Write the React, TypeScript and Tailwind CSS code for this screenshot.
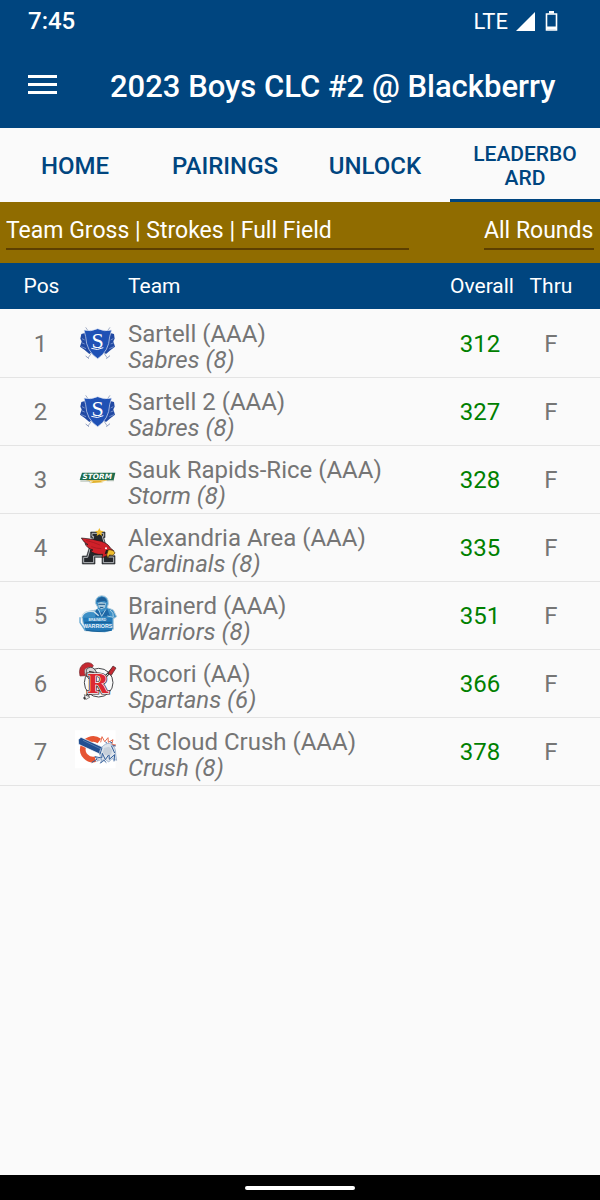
import type { ReactNode } from "react";

type TeamRow = {
  pos: number;
  name: string;
  mascot: string;
  overall: number;
  thru: string;
  logo: ReactNode;
};

function SabresLogo() {
  return (
    <svg viewBox="15 21 132 132" className="block size-11" role="img" aria-label="Sabres">
      <path d="M47 40 L112 132 M120 40 L54 132" stroke="#a3aec6" strokeWidth="3" />
      <path d="M47 126l10 8M109 134l11-9" stroke="#8d9bc0" strokeWidth="3" />
      <path d="M34 60l14-4 4 34 14 24-8 6-14-12-14-10 5-16-4-8z" fill="#2149a3" />
      <path d="M132 60l-14-4-4 34-14 24 8 6 14-12 13-10-5-16 4-8z" fill="#2149a3" />
      <path d="M36 74l8 4M34 86l10 4M34 98l14 6M130 74l-8 4M132 86l-10 4M132 98l-14 6" stroke="#9cb0dc" strokeWidth="2" />
      <path d="M42 48q20 6 41-4 21 10 42 4l-6 20q-2 44-36 66-34-22-36-66z" fill="#1f51b5" stroke="#dfe6f4" strokeWidth="2" />
      <text x="83" y="103" textAnchor="middle" fill="#fff" className="font-['Liberation_Serif'] text-[66px]">
        S
      </text>
      <path d="M64 103q18 8 36-2" fill="none" stroke="#fff" strokeWidth="3" />
    </svg>
  );
}

function StormLogo() {
  return (
    <svg viewBox="15 7 132 132" className="block size-11" role="img" aria-label="Storm">
      <path d="M36 54h100l-5 22H29z" fill="#1c6b4c" />
      <path d="M46 77h72l-26 4 8 2-42 3 12-5z" fill="#e3b32d" />
      <path d="M31 79h24l6 4M110 78h22" stroke="#79917b" strokeWidth="2" fill="none" />
      <text x="82" y="73" textAnchor="middle" fill="#fff" className="font-['DejaVu_Sans'] text-[22px] font-bold italic">
        STORM
      </text>
    </svg>
  );
}

function CardinalsLogo() {
  return (
    <svg viewBox="15 15 132 132" className="block size-11" role="img" aria-label="Cardinals">
      <path
        d="M62 36h43v17h-4l16 54h18v25H96v-20H75v20H37v-24h13l17-55h-5z"
        fill="#24272b"
        stroke="#3a3d41"
        strokeWidth="2"
      />
      <path
        d="M66 40h35v9h-4l17 62h17v17h-31v-20H71v20H41v-16h12l18-63h-5z"
        fill="none"
        stroke="#b9bcc0"
        strokeWidth="3"
      />
      <path d="M88 24l4 8 9 1-7 6 2 9-8-5-8 5 2-9-7-6 9-1z" fill="#f0bd2c" />
      <path
        d="M34 54q32 2 60 10 20 6 27 20l10 8-7 12-16 4-12 6 2-11q-26 2-38-12 6 1 9-1-20-6-24-20 5 4 9 4-14-7-20-20z"
        fill="#cf2029"
        stroke="#1d1718"
        strokeWidth="2"
      />
      <path d="M48 61q24 6 42 14M64 80q16 6 30 6" stroke="#a0171f" strokeWidth="2" fill="none" />
      <path d="M108 90l10 0-4 9-10 4z" fill="#1c1a1b" />
      <path d="M115 89q17 0 20 10l-6 7-11-1-4 9-4-9z" fill="#efbd2c" stroke="#3c2b0b" strokeWidth="2" />
      <circle cx="108" cy="85" r="3" fill="#fff" />
    </svg>
  );
}

function WarriorsLogo() {
  return (
    <svg viewBox="15 15 132 132" className="block size-11" role="img" aria-label="Warriors">
      <path
        d="M76 45q0-20 19-22 21 1 20 24l-3 12 18 7 10 20-10 6v32l-26 8-60-4-8-40q2-16 20-18l22-4 6-6z"
        fill="#3d8fc6"
        stroke="#aecbdc"
        strokeWidth="3"
      />
      <path d="M80 42q2-14 15-15 14 0 16 16l-8-4-13 2z" fill="#1e609a" />
      <path d="M84 45l9-3 15 3-3 14-10 5-9-6z" fill="#a9c9dc" />
      <path d="M85 49h20M90 58l10 1" stroke="#205d91" strokeWidth="3" />
      <path d="M78 64l16 9 18-10 8 22-44 2z" fill="#1e67a6" />
      <path d="M120 66q12 8 10 22l-18-4M85 63l10 22 12-20" fill="none" stroke="#a8cee4" strokeWidth="3" />
      <path d="M36 85q8-19 36-14l14 12" fill="none" stroke="#d1e2eb" strokeWidth="4" />
      <path d="M40 89h86v39q-40 9-82-1z" fill="#2279b9" />
      <text x="82" y="99" textAnchor="middle" fill="#e5f2f8" className="font-['Liberation_Sans'] text-[10px] font-bold">
        BRAINERD
      </text>
      <text x="83" y="120" textAnchor="middle" fill="#eef6fa" className="font-['Liberation_Sans'] text-[16px] font-bold">
        WARRIORS
      </text>
      <path d="M44 103h80M48 127q36 7 74 0" stroke="#175583" strokeWidth="2" fill="none" />
      <path d="M30 88v16l15 22" stroke="#68aad4" strokeWidth="4" fill="none" />
    </svg>
  );
}

function SpartansLogo() {
  return (
    <svg viewBox="15 18 132 132" className="block size-11" role="img" aria-label="Spartans">
      <circle cx="86" cy="83" r="43" fill="#fafafa" stroke="#46474a" strokeWidth="3" />
      <path d="M42 132l88-92" stroke="#393537" strokeWidth="8" />
      <path d="M48 127l66-70" stroke="#e4e3e3" strokeWidth="3" />
      <path d="M114 55l15-22 9 6-14 22z" fill="#c52831" stroke="#3f2427" strokeWidth="2" />
      <path d="M43 119l17 7-11 7-3-4z" fill="#f2f2f2" stroke="#555" strokeWidth="2" />
      <path
        d="M30 63q-7-29 16-39 17-4 24 8l-6 10q-10-9-19 0-5 8 2 20z"
        fill="#c52831"
        stroke="#743035"
        strokeWidth="2"
      />
      <path d="M49 44q12-13 24-2l11 16-14 13-4-10-9 11-9-12z" fill="#d7d7d8" stroke="#515155" strokeWidth="3" />
      <path d="M57 49l15 3M61 57l8-3" stroke="#333" strokeWidth="3" />
      <text
        x="83"
        y="113"
        textAnchor="middle"
        fill="#dd2831"
        stroke="#3c2629"
        strokeWidth="9"
        paintOrder="stroke"
        className="font-['DejaVu_Serif'] text-[78px] font-bold"
      >
        R
      </text>
      <text
        x="83"
        y="113"
        textAnchor="middle"
        fill="#dd2831"
        stroke="#fff"
        strokeWidth="4"
        paintOrder="stroke"
        className="font-['DejaVu_Serif'] text-[78px] font-bold"
      >
        R
      </text>
    </svg>
  );
}

function CrushLogo() {
  return (
    <svg viewBox="15 10 132 132" className="block size-11 overflow-visible" role="img" aria-label="Crush">
      <path d="M15 14h122v114H15z" fill="#fff" />
      <path d="M88 46A31 31 0 1 0 76 101" fill="none" stroke="#e65533" strokeWidth="17" />
      <path d="M92 50l4-17 8 15 10-12 1 14 14-8-4 14 12 2-13 6" fill="#fff" stroke="#e96b4d" strokeWidth="3" />
      <path d="M25 42l8-7 72 33-9 20-70-32z" fill="#214f91" stroke="#fff" strokeWidth="2" />
      <path d="M39 44l58 28" stroke="#6e92bd" strokeWidth="2" />
      <path
        d="M100 60q13-11 25-4 13 10 12 29l3 19-14-5-10 10-9-7-16 10 5-11-16 6 11-15q-8-18 9-32z"
        fill="#dfe5ec"
        stroke="#7d9abf"
        strokeWidth="2"
      />
      <path
        d="M65 111l17-11-7-7 20 4 2-14 9 19 11-16 1 15 16-14-2 20M96 66l-6 20M124 60l10 22M91 113l10-10 8 8"
        fill="none"
        stroke="#315d99"
        strokeWidth="3"
      />
      <path d="M102 67l15-4 10 10-4 14-17 2-8-8z" fill="#c6cfda" />
      <path d="M119 48l8 4M107 48l3 5M128 60l9 1" stroke="#315d99" strokeWidth="3" />
    </svg>
  );
}

const tabs = ["Home", "Pairings", "Unlock"];

const rows: TeamRow[] = [
  { pos: 1, name: "Sartell (AAA)", mascot: "Sabres (8)", overall: 312, thru: "F", logo: <SabresLogo /> },
  { pos: 2, name: "Sartell 2 (AAA)", mascot: "Sabres (8)", overall: 327, thru: "F", logo: <SabresLogo /> },
  { pos: 3, name: "Sauk Rapids-Rice (AAA)", mascot: "Storm (8)", overall: 328, thru: "F", logo: <StormLogo /> },
  { pos: 4, name: "Alexandria Area (AAA)", mascot: "Cardinals (8)", overall: 335, thru: "F", logo: <CardinalsLogo /> },
  { pos: 5, name: "Brainerd (AAA)", mascot: "Warriors (8)", overall: 351, thru: "F", logo: <WarriorsLogo /> },
  { pos: 6, name: "Rocori (AA)", mascot: "Spartans (6)", overall: 366, thru: "F", logo: <SpartansLogo /> },
  { pos: 7, name: "St Cloud Crush (AAA)", mascot: "Crush (8)", overall: 378, thru: "F", logo: <CrushLogo /> },
];

function StatusBar() {
  return (
    <div className="flex h-[42px] items-center justify-between pr-[42px] pl-7">
      <span className="text-2xl font-medium">7:45</span>
      <div className="flex items-center">
        <span className="text-[22px]">LTE</span>
        <svg viewBox="0 0 19 19" className="ml-2 size-[19px]" fill="currentColor" aria-hidden="true">
          <path d="M19 0v19H0z" />
        </svg>
        <svg viewBox="0 0 13 20" className="ml-[10px] h-5 w-[13px]" fill="none" stroke="currentColor" aria-hidden="true">
          <path d="M1.5 3h10v16h-10z" strokeWidth="1.6" />
          <path d="M4 1h5M1 17h11" strokeWidth="3" />
        </svg>
      </div>
    </div>
  );
}

export default function App() {
  return (
    <div className="flex min-h-screen flex-col bg-[#fafafa] font-[Roboto,sans-serif] text-[#757575]">
      <header className="bg-[#00457f] text-white">
        <StatusBar />
        <div className="flex h-[86px] items-center pt-1 pl-7">
          <button type="button" aria-label="Open menu" className="pb-1">
            <svg viewBox="0 0 30 20" className="block h-5 w-[30px]" fill="currentColor" aria-hidden="true">
              <path d="M0 0h29v3H0zM0 8h29v3H0zM0 16h29v3H0z" />
            </svg>
          </button>
          <h1 className="ml-[52px] text-[31px] font-medium whitespace-nowrap">2023 Boys CLC #2 @ Blackberry</h1>
        </div>
      </header>

      <nav className="grid h-[74px] grid-cols-4 font-medium text-[#00457f] uppercase">
        {tabs.map((tab) => (
          <a key={tab} href={`#${tab.toLowerCase()}`} className="flex items-center justify-center pt-0.5 text-2xl">
            {tab}
          </a>
        ))}
        <a
          href="#leaderboard"
          aria-current="page"
          className="flex items-center justify-center border-b-3 border-[#00457f] px-5 pt-1 text-center text-[21px] leading-6 break-all"
        >
          Leaderboard
        </a>
      </nav>

      <div className="flex h-[61px] justify-between bg-[#906c00] px-[6px] pt-3 text-[23px] text-white">
        <select
          aria-label="Leaderboard type"
          className="mr-[75px] h-9 min-w-0 flex-1 appearance-none border-b-2 border-[#5c3f00] bg-transparent"
        >
          <option>Team Gross | Strokes | Full Field</option>
        </select>
        <select aria-label="Rounds" className="h-9 appearance-none border-b-2 border-[#5c3f00] bg-transparent">
          <option>All Rounds</option>
        </select>
      </div>

      <table className="w-full table-fixed">
        <thead className="bg-[#00457f] text-[21px] text-white">
          <tr className="h-[46px]">
            <th className="w-[75px] pt-0.5 pl-2 font-normal">Pos</th>
            <th className="w-[53px]" aria-label="Logo" />
            <th className="pt-0.5 text-left font-normal">Team</th>
            <th className="w-20 pt-0.5 pl-1 font-normal">Overall</th>
            <th className="w-20 pt-0.5 pr-[18px] font-normal">Thru</th>
          </tr>
        </thead>
        <tbody className="text-2xl">
          {rows.map((row) => (
            <tr key={row.pos} className="h-[68px] border-b border-[#e4e4e4]">
              <td className="pt-0.5 pl-1.5 text-center">{row.pos}</td>
              <td>{row.logo}</td>
              <td className="pt-2 leading-[26px]">
                <div>{row.name}</div>
                <div className="italic">{row.mascot}</div>
              </td>
              <td className="pt-0.5 text-center text-[#008000]">{row.overall}</td>
              <td className="pt-0.5 pr-[18px] text-center">{row.thru}</td>
            </tr>
          ))}
        </tbody>
      </table>

      <footer className="mt-auto flex h-[25px] items-center justify-center bg-black">
        <div className="h-1 w-[110px] rounded-sm bg-white" />
      </footer>
    </div>
  );
}
